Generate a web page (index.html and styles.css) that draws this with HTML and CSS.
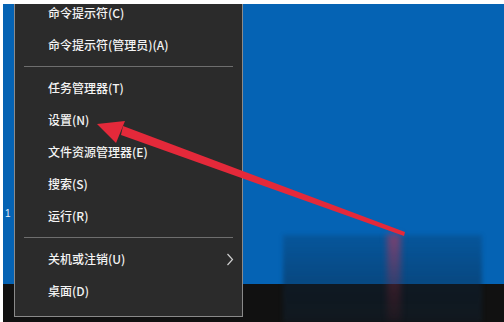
FILE: index.html
```html
<!DOCTYPE html>
<html lang="zh-CN">
<head>
  <meta charset="UTF-8">
  <title>Win+X 菜单</title>
  <link rel="stylesheet" href="styles.css">
</head>
<body>
  <div class="screen">
    <div class="desktop">
      <span class="desk-num">1</span>
    </div>
    <div class="taskbar"></div>

    <ul class="menu">
      <li class="item">命令提示符(C)</li>
      <li class="item">命令提示符(管理员)(A)</li>
      <li class="sep"></li>
      <li class="item">任务管理器(T)</li>
      <li class="item">设置(N)</li>
      <li class="item">文件资源管理器(E)</li>
      <li class="item">搜索(S)</li>
      <li class="item">运行(R)</li>
      <li class="sep"></li>
      <li class="item has-sub">关机或注销(U)
        <svg class="chevron" width="8" height="13" viewBox="0 0 8 13">
          <path d="M1.5 1 L6.5 6.5 L1.5 12" fill="none" stroke="#cfcfcf" stroke-width="1.2"/>
        </svg>
      </li>
      <li class="item">桌面(D)</li>
    </ul>
  </div>

  <!-- watermark smudge in the corner -->
  <div class="smudge"></div>
  <div class="streak"></div>

  <!-- red pointer arrow -->
  <svg class="arrow" width="504" height="322" viewBox="0 0 504 322">
    <polygon points="405,232 404,236 121,135 123,126" fill="#e4293a"/>
    <polygon points="97,124 125,121 116,143" fill="#e4293a"/>
  </svg>
</body>
</html>
```

FILE: styles.css
```css
html, body {
  margin: 0;
  padding: 0;
}
body {
  width: 504px;
  height: 322px;
  background: #fff;
  overflow: hidden;
  position: relative;
  font-family: "Noto Sans CJK SC", "Noto Sans", sans-serif;
}
.screen {
  position: relative;
  margin: 4px 0 0 3px;
  height: 318px;
  display: flex;
  flex-direction: column;
  overflow: hidden;
}
.desktop {
  flex: 1;
  background: #0563b4;
  position: relative;
}
.desk-num {
  position: absolute;
  left: 2px;
  top: 204px;
  color: #e8eef6;
  font-size: 10px;
  font-family: "Liberation Sans", sans-serif;
}
.taskbar {
  height: 38px;
  background: #111;
}
.menu {
  position: absolute;
  left: 11px;
  bottom: 5px;
  width: 227px;
  margin: 0;
  padding: 8px 0 9px;
  list-style: none;
  background: #2b2b2b;
  border: 1px solid #8a8a8a;
  border-top-color: #2b2b2b;
}
.item {
  height: 32px;
  line-height: 32px;
  padding-left: 33px;
  color: #f4f4f4;
  font-size: 12px;
  font-weight: 500;
  position: relative;
}
.sep {
  height: 1px;
  margin: 5px 9px;
  background: #6e6e6e;
}
.chevron {
  position: absolute;
  left: 211px;
  top: 10px;
}
.smudge {
  position: absolute;
  left: 283px;
  top: 235px;
  width: 199px;
  height: 87px;
  background: linear-gradient(to bottom, rgba(12, 36, 60, 0.2), rgba(12, 36, 60, 0.42) 55%, rgba(20, 44, 66, 0.3));
  filter: blur(2px);
}
.streak {
  position: absolute;
  left: 387px;
  top: 234px;
  width: 14px;
  height: 88px;
  background: linear-gradient(to bottom, rgba(210, 50, 80, 0.55), rgba(160, 40, 60, 0.25) 60%, rgba(120, 30, 40, 0.1));
  filter: blur(3px);
}
.arrow {
  position: absolute;
  left: 0;
  top: 0;
  pointer-events: none;
}
```
